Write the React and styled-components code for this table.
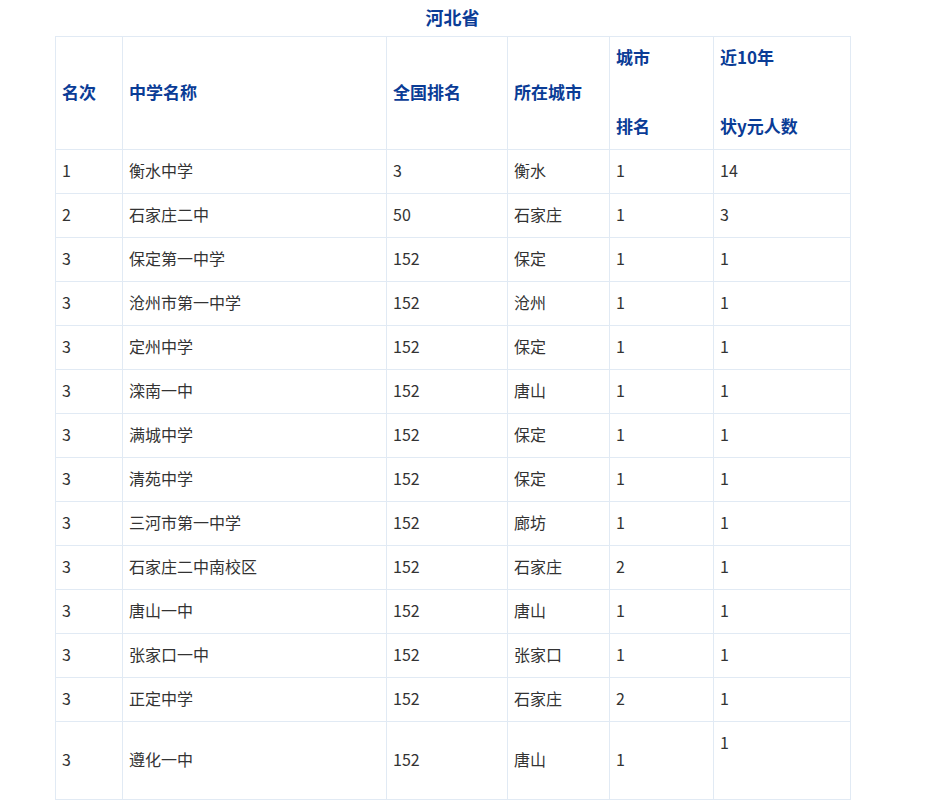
import * as React from "react";
import styled, { createGlobalStyle } from 'styled-components';

const rows = [
    ['1', '衡水中学', '3', '衡水', '1', '14'],
    ['2', '石家庄二中', '50', '石家庄', '1', '3'],
    ['3', '保定第一中学', '152', '保定', '1', '1'],
    ['3', '沧州市第一中学', '152', '沧州', '1', '1'],
    ['3', '定州中学', '152', '保定', '1', '1'],
    ['3', '滦南一中', '152', '唐山', '1', '1'],
    ['3', '满城中学', '152', '保定', '1', '1'],
    ['3', '清苑中学', '152', '保定', '1', '1'],
    ['3', '三河市第一中学', '152', '廊坊', '1', '1'],
    ['3', '石家庄二中南校区', '152', '石家庄', '2', '1'],
    ['3', '唐山一中', '152', '唐山', '1', '1'],
    ['3', '张家口一中', '152', '张家口', '1', '1'],
    ['3', '正定中学', '152', '石家庄', '2', '1'],
];

const widths = [67, 264, 121, 102, 104, 137];

export default function App() {
    return (
        <>
            <GlobalStyle />
            <Wrap>
                <Title>河北省</Title>
                <Table>
                    <colgroup>
                        {widths.map((w, i) => <col key={i} style={{ width: w }} />)}
                    </colgroup>
                    <tbody>
                        <tr>
                            <Th>名次</Th>
                            <Th>中学名称</Th>
                            <Th>全国排名</Th>
                            <Th>所在城市</Th>
                            <Th>
                                <HeadLine $gap>城市</HeadLine>
                                <HeadLine>排名</HeadLine>
                            </Th>
                            <Th>
                                <HeadLine $gap>近10年</HeadLine>
                                <HeadLine>状y元人数</HeadLine>
                            </Th>
                        </tr>
                        {rows.map((r, i) => (
                            <tr key={i}>
                                {r.map((c, j) => <Td key={j}>{c}</Td>)}
                            </tr>
                        ))}
                        <tr>
                            <Td>3</Td>
                            <Td>遵化一中</Td>
                            <Td>152</Td>
                            <Td>唐山</Td>
                            <Td>1</Td>
                            <Td $top>
                                1
                                <Spacer />
                            </Td>
                        </tr>
                    </tbody>
                </Table>
            </Wrap>
        </>
    );
};

const GlobalStyle = createGlobalStyle`
    body {
        margin: 0;
        background: #fff;
        font-family: "Noto Sans CJK SC", "Liberation Sans", sans-serif;
    }
`;

const Wrap = styled.div`
    width: 795px;
    margin-left: 55px;
`;

const Title = styled.div`
    padding-top: 5px;
    margin-bottom: 7px;
    line-height: 24px;
    text-align: center;
    font-size: 18px;
    font-weight: bold;
    color: #0a3c96;
`;

const Table = styled.table`
    width: 795px;
    table-layout: fixed;
    border-collapse: collapse;
    font-size: 16px;
    color: #333;
`;

const Th = styled.td`
    border: 1px solid #e1eaf4;
    padding: 8px 6px 12px;
    line-height: 23px;
    text-align: left;
    vertical-align: middle;
    font-size: 17px;
    font-weight: bold;
    color: #0a3c96;
    height: 92px;
    box-sizing: content-box;
`;

const HeadLine = styled.div`
    margin-bottom: ${p => p.$gap ? '46px' : '0'};
`;

const Td = styled.td`
    border: 1px solid #e1eaf4;
    padding: 9px 6px 11px;
    line-height: 23px;
    vertical-align: ${p => p.$top ? 'top' : 'middle'};
    white-space: nowrap;
`;

const Spacer = styled.div`
    height: 34px;
`;
